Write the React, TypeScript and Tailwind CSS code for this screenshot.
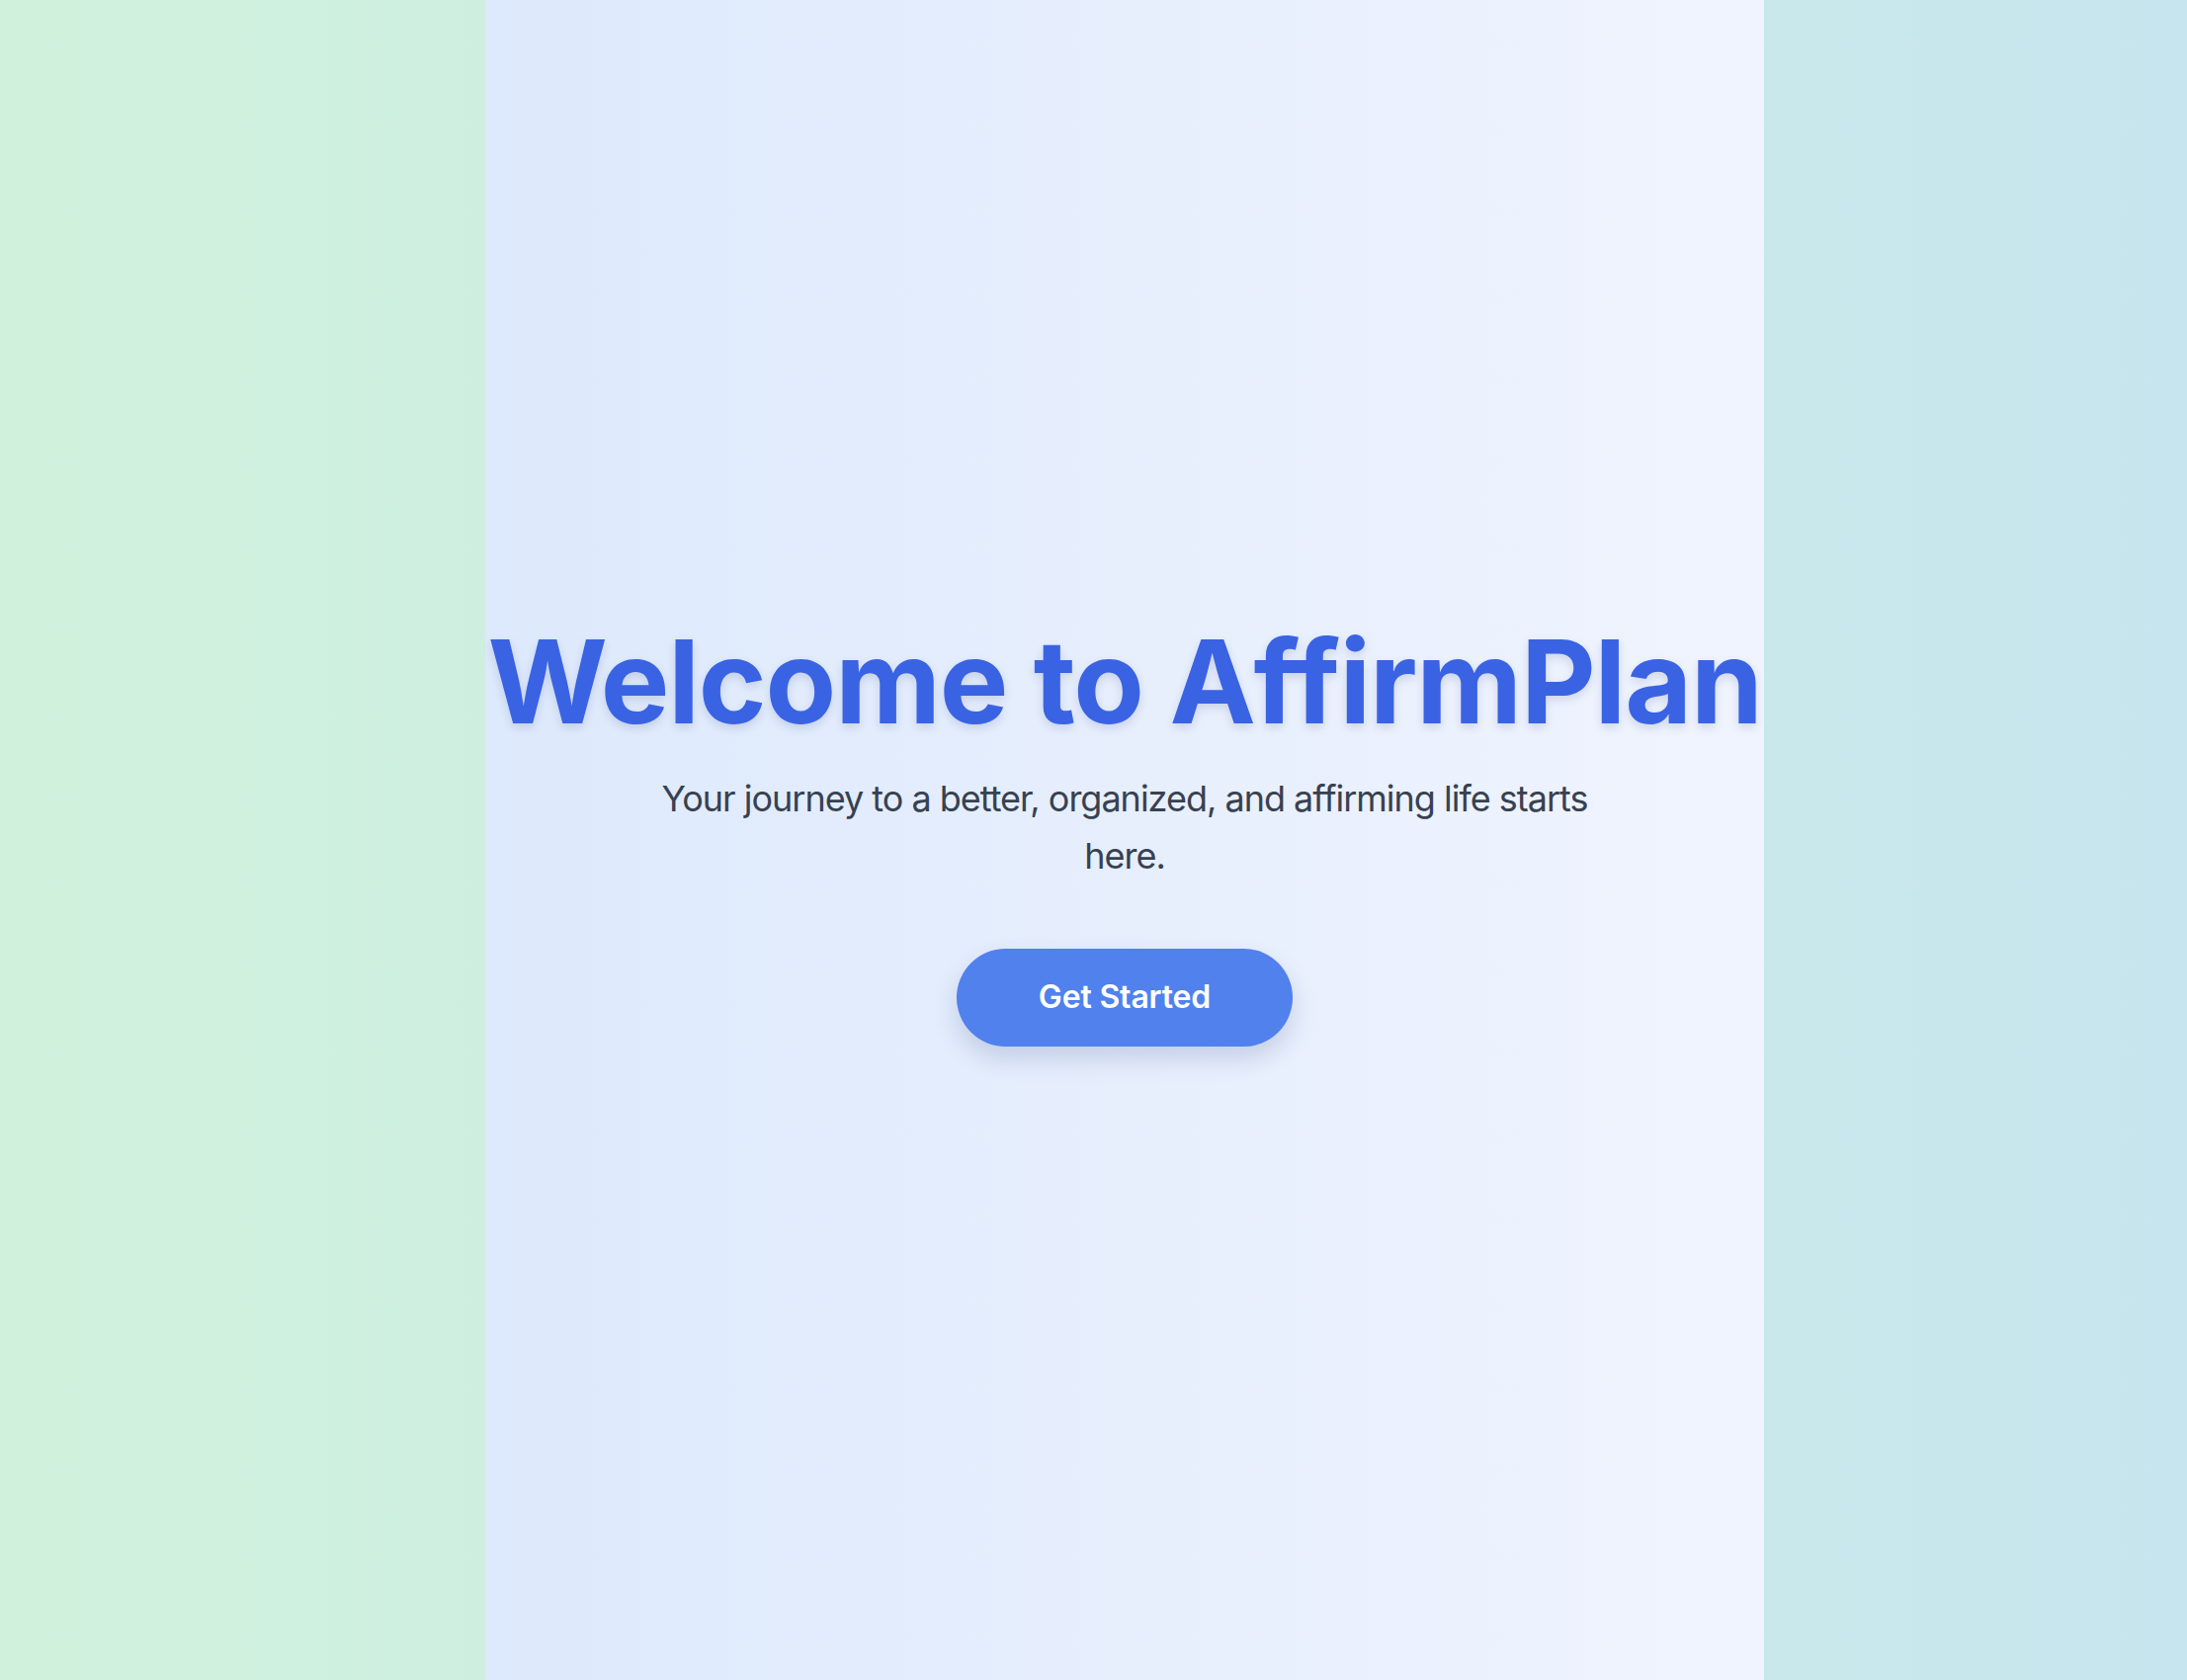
import React from "react"

export default function App() {
    return (
        <div className="min-h-screen flex justify-center pl-[63px] bg-gradient-to-r from-[#d0f2dc] to-[#c7e5ee] font-['Inter',sans-serif]">
            {/* Hero panel */}
            <div className="w-[1294px] min-h-screen flex flex-col items-center justify-center bg-gradient-to-r from-[#dde9fc] to-[#f0f4fe] pb-[10px]">
                <h1 className="text-[117px] leading-none font-bold tracking-[-0.01em] text-[#3a63e3] whitespace-nowrap [text-shadow:0_4px_10px_rgba(30,50,120,0.15)]">
                    Welcome to AffirmPlan
                </h1>
                <p className="mt-8 max-w-[1000px] text-center text-[36px] leading-[1.6] tracking-[-0.028em] text-[#374151]">
                    Your journey to a better, organized, and affirming life starts here.
                </p>
                <button className="mt-16 h-[99px] w-[340px] rounded-full bg-[#5081ed] text-white text-[32px] font-semibold tracking-[-0.005em] shadow-[0_12px_24px_rgba(40,60,120,0.18)]">
                    Get Started
                </button>
            </div>
        </div>
    )
}
